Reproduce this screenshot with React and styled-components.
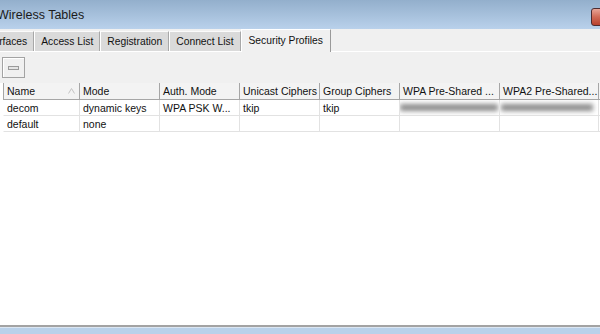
import React from 'react';
import styled, { createGlobalStyle } from 'styled-components';

const Global = createGlobalStyle`
  html, body { margin: 0; padding: 0; background: #ffffff; }
  body { font-family: "Liberation Sans", Arial, sans-serif; }
`

const Window = styled.div`
  width: 600px;
  height: 334px;
  display: flex;
  flex-direction: column;
  overflow: hidden;
  background: #f0f0f0;
`

const TitleBar = styled.div`
  height: 29px;
  flex: none;
  display: flex;
  align-items: center;
  justify-content: space-between;
  background: linear-gradient(#93afcc, #b9d1eb);
  span{
    font-size: 12.5px;
    color: #1b1b1b;
    margin-left: -3px;
    margin-top: 1px;
  }
`

const CloseBtn = styled.div`
  width: 12px;
  height: 16px;
  margin-right: -5px;
  margin-top: 5px;
  border: 1px solid #4d2c30;
  border-radius: 3px;
  background: linear-gradient(#e8a597, #d06a55 50%, #b8412e);
`

const TabStrip = styled.div`
  height: 23px;
  flex: none;
  display: flex;
  align-items: flex-end;
  border-bottom: 1px solid #ffffff;
  box-sizing: border-box;
`

const Tab = styled.div`
  height: ${p => p.active ? '23px' : '20px'};
  box-sizing: border-box;
  display: flex;
  align-items: center;
  padding: 0 ${p => p.active ? '7px' : '6px'};
  font-size: 10.3px;
  color: #111;
  background: ${p => p.active ? '#f0f0f0' : '#dadada'};
  border-top: 1px solid ${p => p.active ? '#ffffff' : '#fbfbfb'};
  border-left: 1px solid #ffffff;
  border-right: 1px solid ${p => p.active ? '#9a9a9a' : '#a8a8a8'};
  margin-left: ${p => p.shift || 0}px;
  margin-bottom: ${p => p.active ? '-1px' : '0'};
  padding-bottom: ${p => p.active ? '2px' : '0'};
`

const Toolbar = styled.div`
  height: 31px;
  flex: none;
  display: flex;
  align-items: center;
  padding-left: 2px;
  box-sizing: border-box;
`

const ToolButton = styled.div`
  width: 23px;
  height: 21px;
  box-sizing: border-box;
  border: 1px solid #a3a3a3;
  box-shadow: inset 1px 1px 0 #ffffff;
  background: #f0f0f0;
  display: flex;
  align-items: center;
  justify-content: center;
  span{
    width: 11px;
    height: 4px;
    border: 1px solid #9a9a9a;
    background: #e4e4e4;
    box-sizing: border-box;
  }
`

const TableArea = styled.div`
  flex: 1;
  background: #ffffff;
  padding-left: 3px;
`

const Row = styled.div`
  display: grid;
  grid-template-columns: 76px 80px 80px 80px 80px 100px 99px;
  height: ${p => p.head ? '16px' : '15px'};
  background: ${p => p.head ? '#f3f3f3' : '#ffffff'};
  border-bottom: 1px solid ${p => p.head ? '#a6a6a6' : '#e2e2e2'};
  border-left: 1px solid ${p => p.head ? '#a6a6a6' : '#ffffff'};
`

const Cell = styled.div`
  position: relative;
  border-right: 1px solid ${p => p.head ? '#a6a6a6' : '#e2e2e2'};
  font-size: 10.5px;
  color: #111;
  padding-left: 3px;
  display: flex;
  align-items: center;
  white-space: nowrap;
  overflow: hidden;
`

const SortMark = styled.svg`
  position: absolute;
  right: 4px;
  top: 5px;
`

const Blur = styled.span`
  display: block;
  height: 7px;
  width: ${p => p.w}px;
  margin-left: ${p => p.ml || 0}px;
  background: #8a8a8a;
  filter: blur(2.5px);
`

const BottomEdge = styled.div`
  height: 9px;
  flex: none;
  border-top: 2px solid #a3a3a3;
  box-sizing: border-box;
  background: #b9d1ea;
  box-shadow: inset 0 1px 0 #dbe6f2;
`

const headers = ['Name', 'Mode', 'Auth. Mode', 'Unicast Ciphers', 'Group Ciphers', 'WPA Pre-Shared ...', 'WPA2 Pre-Shared...']

const rows = [
  ['decom', 'dynamic keys', 'WPA PSK W...', 'tkip', 'tkip', null, null],
  ['default', 'none', '', '', '', '', ''],
]

class App extends React.Component{
  render() {
    return(
      <Window>
        <Global />
        <TitleBar>
          <span>Wireless Tables</span>
          <CloseBtn />
        </TitleBar>
        <TabStrip>
          <Tab shift={-25}>Interfaces</Tab>
          <Tab>Access List</Tab>
          <Tab>Registration</Tab>
          <Tab>Connect List</Tab>
          <Tab active>Security Profiles</Tab>
        </TabStrip>
        <Toolbar>
          <ToolButton><span /></ToolButton>
        </Toolbar>
        <TableArea>
          <Row head>
            {headers.map((h, i) => (
              <Cell head key={h}>
                {h}
                {i === 0 ? (
                  <SortMark width="7" height="6" viewBox="0 0 7 6">
                    <path d="M0.5 5.5 L3.5 0.5 L6.5 5.5" fill="none" stroke="#c4c4c4" strokeWidth="1" />
                  </SortMark>
                ) : null}
              </Cell>
            ))}
          </Row>
          {rows.map((r) => (
            <Row key={r[0]}>
              {r.map((c, i) => (
                <Cell key={i}>
                  {c === null ? <Blur w={i === 5 ? 98 : 92} ml={i === 5 ? -3 : -2} /> : c}
                </Cell>
              ))}
            </Row>
          ))}
        </TableArea>
        <BottomEdge />
      </Window>
    )
  }
}

export default App
